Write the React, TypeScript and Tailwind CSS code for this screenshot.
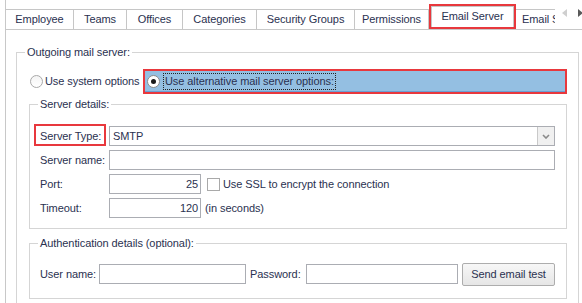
import type { ReactNode } from 'react'

const tabs = [
  { label: 'Employee', w: 'w-[68px]' },
  { label: 'Teams', w: 'w-[53px]' },
  { label: 'Offices', w: 'w-[56px]' },
  { label: 'Categories', w: 'w-[74px]' },
  { label: 'Security Groups', w: 'w-[98px]' },
  { label: 'Permissions', w: 'w-[74px]' },
]

function GroupBox({ title, className, bodyClass, children }: {
  title: string
  className?: string
  bodyClass?: string
  children: ReactNode
}) {
  return (
    <div className={`flex flex-col ${className ?? ''}`}>
      <div className="flex h-[13px] items-center">
        <div className="h-[7px] w-[9px] self-end border-l border-t border-[#d5d5d5]" />
        <span className="whitespace-nowrap px-[2px] leading-[13px]">{title}</span>
        <div className="h-[7px] flex-1 self-end border-r border-t border-[#d5d5d5]" />
      </div>
      <div className={`border-x border-b border-[#d5d5d5] ${bodyClass ?? ''}`}>{children}</div>
    </div>
  )
}

function TextBox({ className, value, right }: { className: string; value?: string; right?: boolean }) {
  return (
    <div
      className={`flex h-[20px] items-center border border-[#abadb3] bg-white px-[2px] leading-[18px] ${
        right ? 'justify-end' : ''
      } ${className}`}
    >
      {value}
    </div>
  )
}

export default function App() {
  return (
    <div className="h-[303px] w-[582px] overflow-hidden bg-white font-['Liberation_Sans',Arial,sans-serif] text-[11px] tracking-[-0.08px] text-[#2a3150]">
      <div className="ml-[5px] flex h-full flex-col border-l border-[#c8c8c8]">
        {/* Tab headers */}
        <div className="flex h-[29px] shrink-0 items-end">
          {tabs.map((t) => (
            <div
              key={t.label}
              className={`flex h-[20px] shrink-0 items-center justify-center border-r border-t border-[#c6c6c6] bg-white ${t.w}`}
            >
              {t.label}
            </div>
          ))}
          <div className="h-[25px] w-[87px] shrink-0 border-2 border-[#e8383d]">
            <div className="flex h-full items-center justify-center border-x border-t border-[#c6c6c6] bg-white pb-[2px]">
              Email Server
            </div>
          </div>
          <div className="flex h-[20px] w-[39px] shrink-0 items-center overflow-hidden whitespace-nowrap border-t border-[#c6c6c6] pl-[6px]">
            Email Settings
          </div>
          <div className="flex h-[29px] flex-1 items-center pb-[4px]">
            <svg width="5" height="8" viewBox="0 0 5 8" className="ml-[7px]">
              <polygon points="5,0 0,4 5,8" fill="#cfcfcf" />
            </svg>
            <svg width="5" height="8" viewBox="0 0 5 8" className="ml-[11px]">
              <polygon points="0,0 5,4 0,8" fill="#5a5a5a" />
            </svg>
          </div>
        </div>

        {/* Tab page */}
        <div className="flex-1 border-t border-[#c8c8c8] pl-[10px] pt-[16px]">
          <GroupBox title="Outgoing mail server:" className="w-[563px]" bodyClass="flex flex-col pb-[30px] pt-[10px]">
            {/* Radio row */}
            <div className="flex h-[25px] items-center">
              <div className="flex w-[126px] items-center pl-[13px]">
                <div className="h-[13px] w-[13px] rounded-full border border-[#a9a9a9] bg-gradient-to-b from-[#f4f4f4] to-white" />
                <span className="ml-[2px] whitespace-nowrap">Use system options</span>
              </div>
              <div className="h-[25px] w-[424px] border-2 border-[#e8383d]">
                <div className="flex h-full items-center border-b border-[#6b9fd3] bg-[#94bfe2] pl-[2px]">
                  <div className="flex h-[13px] w-[13px] items-center justify-center rounded-full border border-[#8a8a8a] bg-white">
                    <div className="h-[5px] w-[5px] rounded-full bg-[#1a1a1a]" />
                  </div>
                  <span className="ml-[3px] whitespace-nowrap border border-dotted border-[#222] px-[1px] leading-[15px]">
                    Use alternative mail server options:
                  </span>
                </div>
              </div>
            </div>

            {/* Server details */}
            <GroupBox title="Server details:" className="ml-[12px] mt-[4px] w-[538px]" bodyClass="flex flex-col pb-[8px] pl-[10px] pt-[13px]">
              <div className="flex h-[24px] items-center">
                <div className="relative flex h-[24px] w-[69px] items-center">
                  <span>Server Type:</span>
                  <div className="absolute left-[-6px] top-0 h-[22px] w-[72px] border-2 border-[#e8383d]" />
                </div>
                <div className="flex h-[20px] w-[446px] border border-[#abadb3] bg-white">
                  <span className="flex-1 pl-[3px] leading-[18px]">SMTP</span>
                  <div className="flex w-[17px] items-center justify-center border-l border-[#c9c9c9] bg-[#f0f0f0]">
                    <svg width="8" height="5" viewBox="0 0 8 5">
                      <polyline points="1,1 4,4 7,1" fill="none" stroke="#8a8a8a" strokeWidth="1.6" />
                    </svg>
                  </div>
                </div>
              </div>
              <div className="flex h-[24px] items-center">
                <div className="w-[69px]">Server name:</div>
                <TextBox className="w-[446px]" />
              </div>
              <div className="flex h-[24px] items-center">
                <div className="w-[69px]">Port:</div>
                <TextBox className="w-[92px]" value="25" right />
                <div className="ml-[6px] h-[13px] w-[13px] border border-[#a9a9a9] bg-white" />
                <span className="ml-[3px]">Use SSL to encrypt the connection</span>
              </div>
              <div className="flex h-[24px] items-center">
                <div className="w-[69px]">Timeout:</div>
                <TextBox className="w-[92px]" value="120" right />
                <span className="ml-[4px]">(in seconds)</span>
              </div>
            </GroupBox>

            {/* Authentication */}
            <GroupBox title="Authentication details (optional):" className="ml-[12px] mt-[8px] w-[538px]" bodyClass="flex items-center pb-[12px] pl-[10px] pt-[12px]">
              <div className="flex h-[24px] items-center">
                <div className="w-[59px]">User name:</div>
                <TextBox className="w-[147px]" />
                <div className="ml-[4px] w-[56px]">Password:</div>
                <TextBox className="w-[152px]" />
                <button className="ml-[4px] h-[23px] w-[93px] rounded-[2px] border border-[#adadad] bg-gradient-to-b from-[#f7f7f7] to-[#e6e6e6] tracking-[-0.08px] text-[#2a3150]">
                  Send email test
                </button>
              </div>
            </GroupBox>
          </GroupBox>
        </div>
      </div>
    </div>
  )
}
